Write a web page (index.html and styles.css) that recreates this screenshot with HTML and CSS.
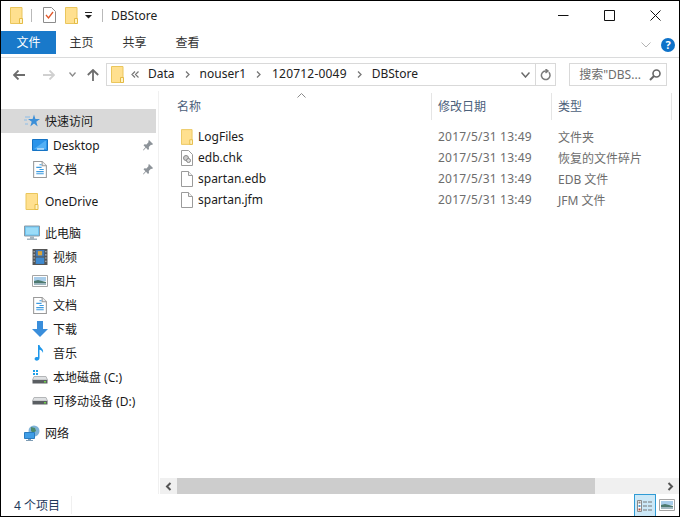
FILE: index.html
```html
<!DOCTYPE html>
<html lang="zh-CN">
<head>
    <meta charset="UTF-8">
    <title>DBStore</title>
    <link rel="stylesheet" href="styles.css">
</head>
<body>

<svg class="defs" width="0" height="0">
    <symbol id="folder" viewBox="0 0 13 17">
        <path d="M.5.5h11.5v16H.5z" fill="#ffe08f" stroke="#eac65c"/>
        <path d="M9.5 11.5h3v5h-3z" fill="#fff3c4" stroke="#e5bb45"/>
    </symbol>
    <symbol id="doc" viewBox="0 0 13 16">
        <path d="M.5.5h8l4 4v11H.5z" fill="#fff" stroke="#9a9a9a"/>
        <path d="M8.5.5v4h4" fill="#eee" stroke="#9a9a9a"/>
        <path d="M6 3.5h2M3 6h5M6 8h4M3 10h7M3 12h7" stroke="#3c9ae0" fill="none"/>
    </symbol>
    <symbol id="blank" viewBox="0 0 12 16">
        <path d="M.5.5h7l4 4v11H.5z" fill="#fff" stroke="#9b9b9b"/>
        <path d="M7.5.5v4h4" fill="#f2f2f2" stroke="#9b9b9b"/>
    </symbol>
    <symbol id="pin" viewBox="0 0 10 11">
        <path d="M6 0l4 4-1 1-1-.3L5.800 7l.2 2-1 1-2-2.200L.5 10.500 0 10l2.400-2.700L.5 5.300l1-1 2 .2L5.600 2 5.300 1z" fill="#8d9399"/>
    </symbol>
    <symbol id="picture" viewBox="0 0 16 12">
        <path d="M.5.5h15v11H.5z" fill="#fff" stroke="#a5a5a5"/>
        <path d="M2 2h12v4H2z" fill="#a8cdea"/>
        <path d="M2 6l4-1 8 2v3H2z" fill="#4d7a70"/>
        <path d="M2 8h12v2H2z" fill="#9fb7c0"/>
    </symbol>
    <symbol id="drive" viewBox="0 0 16 8">
        <path d="M2 .5h12l1.500 3.500H.5z" fill="#dfe1e3" stroke="#b4b6b8"/>
        <path d="M.5 4h15v3.500H.5z" fill="#5a5e62"/>
        <path d="M12 5h2v1.500h-2z" fill="#6fd04a"/>
    </symbol>
    <symbol id="crumb-chevron" viewBox="0 0 5 7">
        <path d="M1 .5L4 3.500 1 6.500" fill="none" stroke="#777" stroke-width="1.300"/>
    </symbol>
</svg>

<div class="window">

    <!-- TITLE BAR -->
    <div class="titlebar">
        <svg class="qat-folder"><use href="#folder"/></svg>
        <span class="qat-sep"></span>
        <svg class="qat-check" viewBox="0 0 13 16">
            <path d="M.5.5h8l4 4v11H.5z" fill="#fff" stroke="#8c8c8c"/>
            <path d="M3 8l2.500 3L10 5" fill="none" stroke="#e0572a" stroke-width="1.300"/>
        </svg>
        <svg class="qat-folder2"><use href="#folder"/></svg>
        <svg class="qat-drop" viewBox="0 0 8 7"><path d="M0 0h7v1H0zM0 3h7L3.500 6.500z" fill="#222"/></svg>
        <span class="qat-sep"></span>
        <span class="title-text">DBStore</span>
        <div class="win-buttons">
            <svg viewBox="0 0 11 11"><path d="M0 5.500h10.500" stroke="#111" fill="none"/></svg>
            <svg viewBox="0 0 11 11"><path d="M.5.500h10v10H.5z" stroke="#111" fill="none"/></svg>
            <svg viewBox="0 0 11 11"><path d="M.5.500l10 10M10.500.500l-10 10" stroke="#111" fill="none"/></svg>
        </div>
    </div>

    <!-- RIBBON TABS -->
    <div class="ribbon">
        <div class="tab tab-file">文件</div>
        <div class="tab">主页</div>
        <div class="tab">共享</div>
        <div class="tab">查看</div>
        <svg class="ribbon-chevron" viewBox="0 0 10 6"><path d="M.5.500L5 5 9.500.500" fill="none" stroke="#b4b4b4"/></svg>
        <div class="help">?</div>
    </div>

    <!-- ADDRESS ROW -->
    <div class="navbar">
        <svg class="nav-back" viewBox="0 0 12 10"><path d="M5.500.500L1 5l4.500 4.500M1 5h11" fill="none" stroke="#6d6d6d" stroke-width="1.800"/></svg>
        <svg class="nav-forward" viewBox="0 0 12 10"><path d="M6.500.500L11 5 6.500 9.500M11 5H0" fill="none" stroke="#d0d0d0" stroke-width="1.800"/></svg>
        <svg class="nav-recent" viewBox="0 0 7 5"><path d="M.5.500L3.500 4l3-3.500" fill="none" stroke="#8a8a8a" stroke-width="1.300"/></svg>
        <svg class="nav-up" viewBox="0 0 12 12"><path d="M.8 6L6 1l5.200 5M6 1v11" fill="none" stroke="#6d6d6d" stroke-width="1.800"/></svg>
        <div class="address">
            <svg class="addr-folder"><use href="#folder"/></svg>
            <svg class="addr-more" viewBox="0 0 8 7"><path d="M4 .5L1 3.500l3 3M7.500.5l-3 3 3 3" fill="none" stroke="#777" stroke-width="1.200"/></svg>
            <span class="crumb">Data</span>
            <svg class="crumb-sep"><use href="#crumb-chevron"/></svg>
            <span class="crumb">nouser1</span>
            <svg class="crumb-sep"><use href="#crumb-chevron"/></svg>
            <span class="crumb crumb-id">120712-0049</span>
            <svg class="crumb-sep"><use href="#crumb-chevron"/></svg>
            <span class="crumb">DBStore</span>
            <svg class="addr-drop" viewBox="0 0 9 6"><path d="M.5.500L4.500 5l4-4.500" fill="none" stroke="#6a6a6a" stroke-width="1.500"/></svg>
        </div>
        <div class="refresh">
            <svg viewBox="0 0 11 12"><path d="M8.800 3.300A4.300 4.300 0 1 1 5.500 2H7M5.500 0L8 2 5.500 4" fill="none" stroke="#7a7a7a" stroke-width="1.500"/></svg>
        </div>
        <div class="search">
            <span class="crumb">搜索"DBS...</span>
            <svg viewBox="0 0 12 12"><circle cx="7.500" cy="4.500" r="3.500" fill="none" stroke="#666" stroke-width="1.600"/><path d="M5 7l-4 4" stroke="#666" stroke-width="2"/></svg>
        </div>
    </div>

    <!-- MAIN -->
    <div class="main">
        <div class="sidebar">
            <div class="nav-item selected">
                <svg class="nav-icon" viewBox="0 0 16 14"><path d="M10 .5l1.400 4.500H16l-3.700 2.800 1.400 4.700L10 9.600l-3.700 2.900 1.400-4.700L4 5h4.600z" fill="#3c8fd8"/><path d="M1 3h5M0 6h3M1 10h3" stroke="#8cbde8"/></svg>
                <span>快速访问</span>
            </div>
            <div class="nav-item sub">
                <svg class="nav-icon" viewBox="0 0 16 12"><path d="M.5.500h15v11H.5z" fill="#2b94ea" stroke="#1573c4"/><path d="M2 10l11-8h1v8z" fill="#53b0f5"/><path d="M5 10h7" stroke="#fff"/></svg>
                <span>Desktop</span>
                <svg class="pin"><use href="#pin"/></svg>
            </div>
            <div class="nav-item sub">
                <svg class="nav-icon small"><use href="#doc"/></svg>
                <span>文档</span>
                <svg class="pin"><use href="#pin"/></svg>
            </div>
            <div class="nav-group">
                <div class="nav-item">
                    <svg class="nav-icon small"><use href="#folder"/></svg>
                    <span>OneDrive</span>
                </div>
            </div>
            <div class="nav-group">
                <div class="nav-item">
                    <svg class="nav-icon" viewBox="0 0 16 15"><path d="M.5.500h15v10H.5z" fill="#6cc4f2" stroke="#8c9aa5"/><path d="M2 2h12v7H2z" fill="#9bdcf8"/><path d="M6 11h4v2H6zM3 13h10v1.500H3z" fill="#a5b4be"/></svg>
                    <span>此电脑</span>
                </div>
                <div class="nav-item sub">
                    <svg class="nav-icon" viewBox="0 0 14 15"><path d="M0 0h14v15H0z" fill="#555"/><path d="M3 1h8v6H3z" fill="#3e7cc0"/><path d="M3 8h8v6H3z" fill="#3f8ad0"/><path d="M5 2h4v4H5z" fill="#d9a43c"/><path d="M1 2h1v1H1zM1 5h1v1H1zM1 8h1v1H1zM1 11h1v1H1zM12 2h1v1h-1zM12 5h1v1h-1zM12 8h1v1h-1zM12 11h1v1h-1z" fill="#eee"/></svg>
                    <span>视频</span>
                </div>
                <div class="nav-item sub">
                    <svg class="nav-icon"><use href="#picture"/></svg>
                    <span>图片</span>
                </div>
                <div class="nav-item sub">
                    <svg class="nav-icon small"><use href="#doc"/></svg>
                    <span>文档</span>
                </div>
                <div class="nav-item sub">
                    <svg class="nav-icon" viewBox="0 0 16 16"><path d="M5 0h6v8h5l-8 8-8-8h5z" fill="#3a8edb"/></svg>
                    <span>下载</span>
                </div>
                <div class="nav-item sub">
                    <svg class="nav-icon" viewBox="0 0 16 16"><path d="M6 0h1.500c.5 3 4.500 3.500 3.500 8-.5-2-2-3-3.500-3.300V13c0 2-2 3-3.700 2.600C2 15 2.300 12.500 4 12c.8-.2 1.500-.1 2 .2z" fill="#1f97ea"/></svg>
                    <span>音乐</span>
                </div>
                <div class="nav-item sub">
                    <svg class="nav-icon" viewBox="0 0 16 14"><path d="M1 0h2v2H1zM4 0h2v2H4zM1 3h2v2H1zM4 3h2v2H4z" fill="#1fa0e8"/><use href="#drive" y="6" width="16" height="8"/></svg>
                    <span>本地磁盘 (C:)</span>
                </div>
                <div class="nav-item sub">
                    <svg class="nav-icon" viewBox="0 0 16 8"><use href="#drive"/></svg>
                    <span>可移动设备 (D:)</span>
                </div>
            </div>
            <div class="nav-group">
                <div class="nav-item">
                    <svg class="nav-icon" viewBox="0 0 16 16"><circle cx="10" cy="6" r="5.500" fill="#7fb3d8"/><path d="M7 2l4 1 1 3-3 2-2-2z" fill="#4c8a6a"/><path d="M.5 7.500h10v6H.5z" fill="#3f9de6" stroke="#2a7cc0"/><path d="M4 14h3v1H4zM2 15h7v1H2z" fill="#7f9db5"/></svg>
                    <span>网络</span>
                </div>
            </div>
        </div>

        <div class="content">
            <div class="columns">
                <svg class="sort-caret" viewBox="0 0 9 5"><path d="M.5 4.500l4-4 4 4" fill="none" stroke="#8a8a8a"/></svg>
                <div class="col col-name">名称</div>
                <div class="col col-date">修改日期</div>
                <div class="col col-type">类型</div>
                <div class="col col-rest"></div>
            </div>
            <div class="files">
                <div class="file">
                    <div class="col-name file-name"><svg class="file-icon"><use href="#folder"/></svg>LogFiles</div>
                    <div class="col-date file-date">2017/5/31 13:49</div>
                    <div class="col-type">文件夹</div>
                </div>
                <div class="file">
                    <div class="col-name file-name">
                        <svg class="file-icon" viewBox="0 0 12 16">
                            <path d="M.5.500h7l4 4v11H.5z" fill="#fff" stroke="#9b9b9b"/>
                            <circle cx="5" cy="8" r="2.500" fill="#ccc" stroke="#888"/>
                            <circle cx="7.500" cy="10.500" r="2" fill="#ddd" stroke="#888"/>
                        </svg>edb.chk
                    </div>
                    <div class="col-date file-date">2017/5/31 13:49</div>
                    <div class="col-type">恢复的文件碎片</div>
                </div>
                <div class="file">
                    <div class="col-name file-name"><svg class="file-icon"><use href="#blank"/></svg>spartan.edb</div>
                    <div class="col-date file-date">2017/5/31 13:49</div>
                    <div class="col-type">EDB 文件</div>
                </div>
                <div class="file">
                    <div class="col-name file-name"><svg class="file-icon"><use href="#blank"/></svg>spartan.jfm</div>
                    <div class="col-date file-date">2017/5/31 13:49</div>
                    <div class="col-type">JFM 文件</div>
                </div>
            </div>
            <div class="hscroll">
                <div class="scroll-btn">
                    <svg viewBox="0 0 7 9"><path d="M5.500 1L2 4.500 5.500 8" fill="none" stroke="#555" stroke-width="2"/></svg>
                </div>
                <div class="scroll-track"><div class="scroll-thumb"></div></div>
                <div class="scroll-btn">
                    <svg viewBox="0 0 7 9"><path d="M1.500 1L5 4.500 1.500 8" fill="none" stroke="#555" stroke-width="2"/></svg>
                </div>
            </div>
        </div>
    </div>

    <!-- STATUS BAR -->
    <div class="statusbar">
        <span class="status-count">4 个项目</span>
        <div class="view-buttons">
            <div class="view-btn active">
                <svg viewBox="0 0 16 12"><path d="M.5.500h4v11h-4z" fill="#fff" stroke="#8a8a8a"/><path d="M1.500 1.500h2v2h-2z" fill="#888"/><path d="M1.500 5h2v2h-2z" fill="#4f9ad0"/><path d="M1.500 8.500h2v2h-2z" fill="#b04a3a"/><path d="M6 2h4M11 2h4M6 6h4M11 6h4M6 10h4M11 10h4" stroke="#777"/></svg>
            </div>
            <div class="view-btn">
                <svg viewBox="0 0 16 12"><use href="#picture"/></svg>
            </div>
        </div>
    </div>

</div>

</body>
</html>
```

FILE: styles.css
```css
* {
    box-sizing: border-box;
}

body {
    margin: 0;
    font-family: "Noto Sans", "Noto Sans CJK SC", sans-serif;
    font-size: 12px;
    color: #1a1a1a;
    background: #fff;
}

svg {
    display: block;
    flex: none;
}

.defs {
    position: absolute;
}

.window {
    width: 680px;
    height: 517px;
    border: 1px solid #000;
    display: flex;
    flex-direction: column;
    overflow: hidden;
}

/* TITLE BAR */
.titlebar {
    height: 30px;
    display: flex;
    align-items: center;
    padding: 0 0 2px 9px;
}

.qat-folder {
    width: 13px;
    height: 17px;
}

.qat-sep {
    width: 1px;
    height: 13px;
    background: #b9b9b9;
    margin: 0 8px;
}

.qat-check {
    width: 13px;
    height: 16px;
    margin: 0 9px 0 3px;
}

.qat-folder2 {
    width: 13px;
    height: 17px;
    margin-right: 7px;
}

.qat-drop {
    width: 8px;
    height: 7px;
    margin-right: 1px;
}

.title-text {
    color: #222;
}

.win-buttons {
    margin-left: auto;
    display: flex;
    gap: 35px;
    padding-right: 18px;
}

.win-buttons svg {
    width: 11px;
    height: 11px;
}

/* RIBBON */
.ribbon {
    height: 27px;
    display: flex;
    align-items: flex-start;
    border-bottom: 1px solid #dadbdc;
}

.tab {
    width: 53px;
    height: 23px;
    line-height: 23px;
    text-align: center;
    color: #333;
}

.tab-file {
    width: 55px;
    margin-right: -1px;
    background: #1979ca;
    color: #fff;
}

.ribbon-chevron {
    width: 10px;
    height: 6px;
    margin: 11px 0 0 auto;
}

.help {
    width: 14px;
    height: 14px;
    margin: 7px 4px 0 10px;
    border-radius: 50%;
    background: #0e72c9;
    color: #fff;
    font-size: 11px;
    font-weight: bold;
    line-height: 14px;
    text-align: center;
}

/* ADDRESS ROW */
.navbar {
    height: 33px;
    display: flex;
    align-items: center;
    padding: 0 12px;
}

.nav-back,
.nav-forward {
    width: 12px;
    height: 10px;
}

.nav-back {
    margin-right: 18px;
}

.nav-forward {
    margin-right: 14px;
}

.nav-recent {
    width: 7px;
    height: 5px;
    margin-right: 11px;
}

.nav-up {
    width: 12px;
    height: 12px;
    margin-right: 7px;
}

.address {
    width: 431px;
    height: 23px;
    border: 1px solid #d9d9d9;
    display: flex;
    align-items: center;
    padding-left: 4px;
    color: #222;
}

.addr-folder {
    width: 13px;
    height: 17px;
}

.addr-more {
    width: 8px;
    height: 7px;
    margin: 0 9px 0 7px;
}

.crumb {
    padding-bottom: 2px;
}

.crumb-id {
    letter-spacing: .2px;
    margin-left: 1px;
}

.crumb-sep {
    width: 5px;
    height: 7px;
    margin: 0 10px;
}

.addr-drop {
    width: 9px;
    height: 6px;
    margin: 0 5px 0 auto;
}

.refresh {
    width: 20px;
    height: 23px;
    border: 1px solid #d9d9d9;
    border-left: none;
    display: flex;
    align-items: center;
    justify-content: center;
}

.refresh svg {
    width: 11px;
    height: 12px;
}

.search {
    width: 98px;
    height: 23px;
    margin-left: 13px;
    border: 1px solid #d9d9d9;
    display: flex;
    align-items: center;
    justify-content: space-between;
    padding: 0 5px 0 9px;
    color: #6d6d6d;
}

.search svg {
    width: 12px;
    height: 12px;
}

/* MAIN */
.main {
    flex: 1;
    display: flex;
    min-height: 0;
}

.sidebar {
    width: 158px;
    padding-top: 18px;
    border-right: 1px solid #f0f0f0;
}

.nav-group {
    margin-top: 8px;
}

.nav-item {
    width: 155px;
    height: 24px;
    display: flex;
    align-items: center;
    padding-left: 23px;
    gap: 5px;
    white-space: nowrap;
}

.nav-item.sub {
    padding-left: 31px;
}

.nav-item.selected {
    background: #d9d9d9;
}

.nav-icon {
    width: 16px;
    height: 16px;
}

.nav-icon.small {
    height: 17px;
}

.pin {
    width: 10px;
    height: 11px;
    margin-left: auto;
    margin-right: 3px;
}

/* FILE LIST */
.content {
    flex: 1;
    min-width: 0;
    display: flex;
    flex-direction: column;
    position: relative;
}

.columns {
    height: 33px;
    margin-top: 2px;
    display: flex;
    color: #4c607a;
    line-height: 28px;
}

.sort-caret {
    position: absolute;
    left: 138px;
    top: 2px;
    width: 9px;
    height: 5px;
}

.col {
    height: 27px;
    border-right: 1px solid #e5e5e5;
}

.col-name {
    width: 273px;
    padding-left: 18px;
}

.col-date {
    width: 120px;
    padding-left: 6px;
}

.col-type {
    width: 120px;
    padding-left: 6px;
}

.col-rest {
    flex: 1;
    border-right: none;
}

.files {
    flex: 1;
}

.file {
    height: 21px;
    display: flex;
    align-items: center;
    color: #6d6d6d;
}

.file-date {
    letter-spacing: .2px;
}

.file-name {
    display: flex;
    align-items: center;
    color: #1a1a1a;
    padding-left: 22px;
}

.file-icon {
    width: 12px;
    height: 16px;
    margin-right: 5px;
}

.hscroll {
    height: 16px;
    margin-left: 1px;
    display: flex;
    background: #f0f0f0;
}

.scroll-btn {
    width: 17px;
    height: 16px;
    display: flex;
    align-items: center;
    justify-content: center;
}

.scroll-btn svg {
    width: 7px;
    height: 9px;
}

.scroll-track {
    flex: 1;
}

.scroll-thumb {
    width: 418px;
    height: 16px;
    background: #cdcdcd;
}

/* STATUS BAR */
.statusbar {
    height: 22px;
    display: flex;
    align-items: center;
    justify-content: space-between;
    padding-left: 13px;
    color: #1e395b;
}

.status-count {
    padding-right: 11px;
    border-right: 1px solid #f0f0f0;
}

.view-buttons {
    display: flex;
    padding-right: 1px;
}

.view-btn {
    width: 22px;
    height: 22px;
    display: flex;
    align-items: center;
    justify-content: center;
}

.view-btn svg {
    width: 16px;
    height: 12px;
}

.view-btn.active {
    background: #cce8f7;
    border: 1px solid #2f9bd5;
    border-bottom: none;
}
```
